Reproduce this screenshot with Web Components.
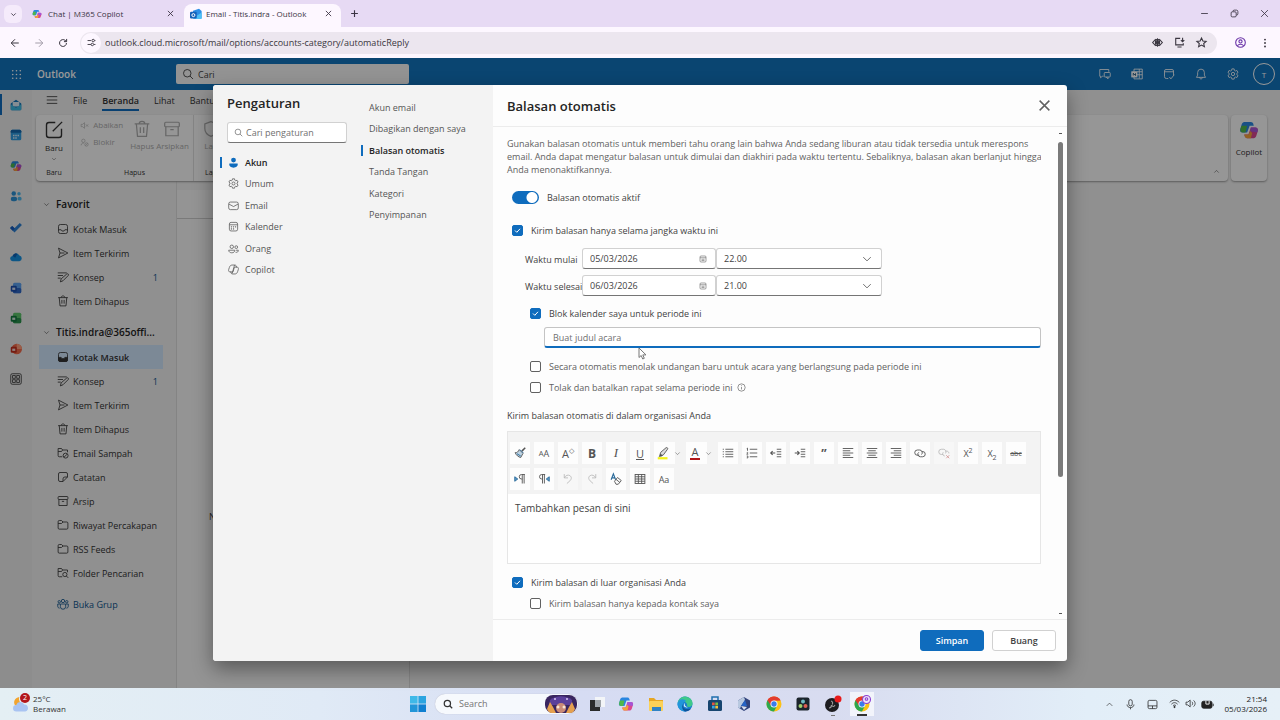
<!DOCTYPE html>
<html lang="id">
<head>
<meta charset="utf-8">
<title>Email - Titis.indra - Outlook</title>
<style>
  html, body {
    margin: 0;
    height: 100%;
  }

  body {
    --font: "Open Sans", "Noto Sans", sans-serif;
    --brand: #0f6cbd;
    font-family: var(--font);
    font-size: 9px;
    line-height: 13px;
    color: #424242;
    display: flex;
    flex-direction: column;
    overflow: hidden;
  }

  outlook-app {
    flex: 1;
    min-height: 0;
  }
</style>
</head>
<body>
  <browser-tabs></browser-tabs>
  <browser-toolbar></browser-toolbar>
  <outlook-app>
    <settings-dialog slot="dialog"></settings-dialog>
  </outlook-app>
  <task-bar></task-bar>

<script>
const copilotLogo = `
  <path d="M5 1.500h4.500c1 0 1.600.6 1.900 1.500l.4 1.500H8.500L6.500 10H3C1.200 10 .6 8.800 1 7.300l1.200-4C2.600 2 3.600 1.500 5 1.500z" fill="#2a86e0" stroke="none"/>
  <path d="M1.200 7 2 4.500h4.500L5.200 10H3C1.500 10 .8 8.700 1.200 7z" fill="#4fb84a" stroke="none"/>
  <path d="M11 14.500H6.500c-1 0-1.600-.6-1.900-1.500l-.4-1.500h3.300l2-5.500H13c1.800 0 2.400 1.200 2 2.700l-1.200 4c-.4 1.300-1.400 1.800-2.800 1.800z" fill="#d9468f" stroke="none"/>
  <path d="M4.200 11.500h3.500l1.300-3 1.500 2-1 4h-3c-1 0-1.600-.6-1.900-1.500z" fill="#f2a23a" stroke="none"/>
  <path d="M9.500 6H13c1.500 0 2.300 1.200 2 2.700L14.500 10 9 9z" fill="#a455d6" stroke="none"/>`;

const chromeLogo = `
  <g stroke="none"><circle cx="8" cy="8" r="7.500" fill="#fbc116"/>
  <path d="M8 8 1.500 4.300A7.500 7.500 0 0 1 14.500 4.300L8 4.500z" fill="#e33b2e"/>
  <path d="M1.500 4.300A7.500 7.500 0 0 0 8 15.500l3-5.700L8 8z" fill="#2da94f"/>
  <path d="M1.500 4.300 5 9.800 8 4.500h6.500A7.500 7.500 0 0 0 1.500 4.300z" fill="#e33b2e"/>
  <circle cx="8" cy="8" r="3.500" fill="#fff"/><circle cx="8" cy="8" r="2.700" fill="#3b7de9"/></g>`;

const officeLogo = (light, dark) => `
  <g stroke="none"><rect x="4" y="1" width="11" height="14" rx="2" fill="${light}"/>
  <rect x="4" y="8" width="11" height="7" rx="2" fill="${dark}" opacity=".7"/>
  <rect x="1" y="5" width="8" height="8" rx="1.500" fill="${dark}"/>
  <rect x="3" y="7.500" width="4" height="3" fill="#fff" opacity=".8"/></g>`;

// All glyphs live on a 16x16 grid
const icons = {
  chevron: '<path d="m3 5.500 5 5 5-5"/>',
  'chevron-up': '<path d="m3 10.500 5-5 5 5"/>',
  close: '<path d="m2 2 12 12M14 2 2 14"/>',
  plus: '<path d="M8 2v12M2 8h12"/>',
  minus: '<path d="M2 8h12"/>',
  restore: '<rect x="2" y="5" width="9" height="9" rx="2"/><path d="M5 4.500C5 3 6 2 7.500 2h4C13 2 14 3 14 4.500v4c0 1.500-1 2.500-2.500 2.500"/>',
  back: '<path d="M14 8H2m6-6L2 8l6 6"/>',
  forward: '<path d="M2 8h12M8 2l6 6-6 6"/>',
  reload: '<path d="M13.500 8A5.500 5.500 0 1 1 11.500 3.800L13.500 5.500M13.800 1.500v4.300H9.500"/>',
  tune: '<path d="M1 4.500h6M12.500 11.500H15M1 11.500h6"/><circle cx="11" cy="4.500" r="2.200"/><circle cx="9.500" cy="11.500" r="2.200"/><path d="M13.500 4.500H15"/>',
  eye: '<path d="M5.500 3 1 8l4.500 5M10.500 3 15 8l-4.500 5"/><ellipse cx="8" cy="8" rx="3" ry="4.500"/><circle cx="8" cy="8" r="1.800" fill="currentColor"/><path d="M8 2v12"/>',
  install: '<path d="M9 2H2.500v9.500h11V9M5 14.500h6"/><path d="M12.500 1v5.500m-2.500-2 2.500 2.500L15 4.500"/>',
  star: '<path d="m8 1.500 2 4.300 4.700.5-3.500 3.200 1 4.700L8 11.800l-4.200 2.400 1-4.700L1.300 6.300 6 5.800z"/>',
  profile: '<circle cx="8" cy="8" r="7"/><circle cx="8" cy="6.500" r="2.300"/><path d="M3.500 12.800c2-3 7-3 9 0"/>',
  more: '<g fill="currentColor" stroke="none"><circle cx="8" cy="2.500" r="1.500"/><circle cx="8" cy="8" r="1.500"/><circle cx="8" cy="13.500" r="1.500"/></g>',
  grid: '<g fill="currentColor" stroke="none"><circle cx="2.500" cy="2.500" r="1.200"/><circle cx="8" cy="2.500" r="1.200"/><circle cx="13.500" cy="2.500" r="1.200"/><circle cx="2.500" cy="8" r="1.200"/><circle cx="8" cy="8" r="1.200"/><circle cx="13.500" cy="8" r="1.200"/><circle cx="2.500" cy="13.500" r="1.200"/><circle cx="8" cy="13.500" r="1.200"/><circle cx="13.500" cy="13.500" r="1.200"/></g>',
  search: '<circle cx="7" cy="7" r="5"/><path d="m10.700 10.700 4 4"/>',
  chat: '<path d="M6 11H4.500L2 13v-2H1V2h12v3"/><rect x="7" y="6" width="8" height="6" rx="1"/><path d="M12 12v2.500L9.500 12"/>',
  news: '<path d="M4 5V1.500h11v13H4V12M8 5h7M8 9h7M11 1.500V14"/><rect x="1" y="5" width="7" height="7" fill="currentColor"/><path d="M3 10V7l3 3V7" stroke="#0b4671"/>',
  task: '<path d="M7 14H4.500A2.500 2.500 0 0 1 2 11.500V4a2 2 0 0 1 2-2h8a2 2 0 0 1 2 2v6M2 5h12"/><path d="m8.500 12 2 2.500L15 9"/>',
  bell: '<path d="M8 1.500A4.500 4.500 0 0 0 3.500 6v3.500L2 12.500h12l-1.500-3V6A4.500 4.500 0 0 0 8 1.500zM6 12.500c0 2.700 4 2.700 4 0"/>',
  gear: '<circle cx="8" cy="8" r="2.200"/><path d="m6.500 1.200-.4 2-1.300.8-2-.7-1.500 2.600L2.900 7.200v1.600l-1.600 1.300 1.500 2.600 2-.7 1.300.8.4 2h3l.4-2 1.300-.8 2 .7 1.500-2.600-1.600-1.300V7.200l1.600-1.300-1.500-2.600-2 .7-1.300-.8-.4-2z"/>',
  menu: '<path d="M1 3.500h14M1 8h14M1 12.500h14"/>',
  compose: '<path d="M9 2H4a2 2 0 0 0-2 2v8a2 2 0 0 0 2 2h8a2 2 0 0 0 2-2V7M7 9l7.500-7.500"/>',
  mute: '<path d="M2 6h2.500L8 3v10l-3.500-3H2zM10.500 6l4 4m0-4-4 4"/>',
  block: '<circle cx="6" cy="5" r="3"/><path d="M2 13c0-4 3-4 5-4"/><circle cx="11.500" cy="11.500" r="3"/><path d="m9.500 13.500 4-4"/>',
  trash: '<path d="M1.500 3.500h13M5.500 3.500c0-3 5-3 5 0M3 3.500 4 14.500h8l1-11M6.500 6.500v5M9.500 6.500v5"/>',
  archive: '<rect x="1.500" y="2" width="13" height="4" rx="1"/><path d="M2.500 6v8h11V6M6.500 8.500h3"/>',
  shield: '<path d="M8 1.500 2.500 3.500v4c0 4 3 6 5.500 7 2.500-1 5.500-3 5.500-7v-4z"/>',
  inbox: '<rect x="2" y="2" width="12" height="12" rx="2.500"/><path d="M2 9h3.500c.5 2.500 4.500 2.500 5 0H14"/>',
  'inbox-fill': '<rect x="2" y="2" width="12" height="12" rx="2.500"/><path d="M2 8.500h3.500c.5 2.500 4.500 2.500 5 0H14V12a2 2 0 0 1-2 2H4a2 2 0 0 1-2-2z" fill="currentColor"/>',
  sent: '<path d="m2 1.500 12.500 6.500L2 14.500 4 8zM4 8h6"/>',
  draft: '<path d="M1 2.500h12M1 6h7M1 9.500h4"/><path d="m4.500 14.500 1-4L13 4c1.500-1 3 .5 2 2l-7 7z"/>',
  junk: '<path d="M7 13H3a1.500 1.500 0 0 1-1.500-1.500V2H6l1.500 2H14v3M1.500 6H6l1.500-2"/><circle cx="11.500" cy="11.500" r="3.300"/><path d="m9.500 13.500 4-4"/>',
  note: '<path d="M14 8V4a2 2 0 0 0-2-2H4a2 2 0 0 0-2 2v8a2 2 0 0 0 2 2h4zM8 14v-3.500A2.500 2.500 0 0 1 10.500 8H14"/>',
  folder: '<path d="M1.500 12V3.500A1.500 1.500 0 0 1 3 2h3l2 2h5a1.500 1.500 0 0 1 1.500 1.500V12a1.500 1.500 0 0 1-1.500 1.500H3A1.500 1.500 0 0 1 1.500 12zM1.500 6H6l2-2"/>',
  'folder-search': '<path d="M7 13H3a1.500 1.500 0 0 1-1.500-1.500V2H6l1.500 2H14v3M1.500 6H6l1.500-2"/><circle cx="10.500" cy="10" r="2.800"/><path d="m12.500 12 2.500 2.500"/>',
  group: '<circle cx="8" cy="4" r="2.200"/><circle cx="3" cy="5" r="1.600"/><circle cx="13" cy="5" r="1.600"/><path d="M4.500 8h7v3.500a3.500 3.500 0 0 1-7 0zM4 8H1v3c0 1.500 1 2.500 2.500 2.500M12 8h3v3c0 1.500-1 2.500-2.500 2.500"/>',
  person: '<g fill="currentColor" stroke="none"><circle cx="8" cy="4.500" r="3.500"/><path d="M2 9.500h12c1 4-2.500 6-6 6s-7-2-6-6z"/></g>',
  mail: '<rect x="1" y="3" width="14" height="11" rx="2.500"/><path d="m1.500 6 6.500 3.500L14.500 6"/>',
  calendar: '<rect x="2" y="2" width="12" height="12.500" rx="2.500"/><path d="M2 5.500h12"/><g fill="currentColor" stroke="none"><circle cx="5" cy="8.500" r="1"/><circle cx="8" cy="8.500" r="1"/><circle cx="11" cy="8.500" r="1"/><circle cx="5" cy="11.500" r="1"/><circle cx="8" cy="11.500" r="1"/></g>',
  people: '<circle cx="5.500" cy="5.500" r="2.500"/><circle cx="12" cy="6" r="2"/><path d="M1 10.500h9c0 5-9 5-9 0zM11.500 10.500H15c0 2.500-1.500 3.500-4 3"/>',
  copilot: '<path d="M6 1.500h4c1.500 0 2 1 2.200 3H13c2 0 2.500 1.500 2 3.500l-1 3c-.5 2-1.500 3-3.500 3.500h-4c-1.500 0-2-1-2.200-3H3c-2 0-2.500-1.500-2-3.500l1-3c.5-2 2-3.500 4-3.500zM9.500 1.500 6 14M10 4.500h3M3.500 11.500H7c1 0 1.500-7 3-7"/>',
  date: '<rect x="2" y="2" width="12" height="12" rx="2"/><path d="M2 5.500h12M5 8.500h6M5 11h6"/>',
  info: '<circle cx="8" cy="8" r="6.500"/><path d="M8 7v4.500M8 4.200v1.300"/>',
  brush: '<path d="m15 1-4.500 4.500" stroke-width="2"/><path d="m7 3.500 5 5-3 5.500c-3-.5-6-3-7.500-6.500 2.500.3 4-1 5.500-4z" fill="#bcd3e4"/><path d="m4 9 5 3M8 3.500l4.500 4.500" stroke="#2a6a9a"/>',
  marker: '<path d="M1 15h13" stroke="#f3f31a" stroke-width="3"/><path d="m4 10 1-3L12 1c1.500-.8 3 .7 2 2L8.500 10.500 5 12z" fill="#ddd"/><path d="m3 12.500 2-3 2 2z" fill="currentColor"/>',
  bullets: '<path d="M4.500 3H15M4.500 6.300H15M4.500 9.700H15M4.500 13H15M1 3h1.500M1 6.300h1.500M1 9.700h1.500M1 13h1.500"/>',
  numbers: '<path d="M5 3h10M5 8h10M5 13h10M1 2l1-.5V5M1 7.500c1.500-1 2 .5 0 2h2M1 12h1.500v2.500H1"/>',
  outdent: '<path d="M9 3h6M9 6.300h6M9 9.700h6M9 13h6"/><path d="M7 8H1m2.500-2.500L1 8l2.500 2.500" stroke-width="1.500"/>',
  indent: '<path d="M9 3h6M9 6.300h6M9 9.700h6M9 13h6"/><path d="M1 8h6M4.500 5.500 7 8l-2.500 2.500" stroke-width="1.500"/>',
  left: '<path d="M1 2h14M1 5h10M1 8h14M1 11h10M1 14h14"/>',
  center: '<path d="M1 2h14M3 5h10M1 8h14M3 11h10M1 14h14"/>',
  right: '<path d="M1 2h14M5 5h10M1 8h14M5 11h10M1 14h14"/>',
  link: '<path d="M7 11H4.500a3.500 3.500 0 0 1 0-7h3a3.500 3.500 0 0 1 2.500 6"/><path d="M10 6h1.500a3.300 3.300 0 0 1 0 7h-3A3.300 3.300 0 0 1 6.500 7"/>',
  unlink: '<path d="M7 10H4.500a3 3 0 0 1 0-7h3a3.500 3.500 0 0 1 2.500 5.500M9 12a3 3 0 0 1-2-5M10 5.500h1.500c2 0 3 1.500 3 3"/><path d="m11 11 4 4m0-4-4 4" stroke="#d29a9a"/>',
  ltr: '<path d="m1 5 4 3-4 3z" fill="#5b9bc8" stroke="#2a6a9a"/><path d="M14.500 2H10a3 3 0 0 0 0 6h1M11 2v12M13.500 2v12"/>',
  rtl: '<path d="m15 5-4 3 4 3z" fill="#5b9bc8" stroke="#2a6a9a"/><path d="M9.500 2H5a3 3 0 0 0 0 6h1M6 2v12M8.500 2v12"/>',
  undo: '<path d="M3 1.500v5h5M3 6.500C5 3 8 2 10.500 3.500c3 2 2 5 0 7L6.500 14"/>',
  redo: '<path d="M13 1.500v5H8M13 6.500C11 3 8 2 5.500 3.500c-3 2-2 5 0 7l4 3.500"/>',
  clear: '<path d="M1.500 9 4.500 1l3 8M2.500 6.500h4" stroke="#2a6a9a" stroke-width="1.500"/><path d="m6 11 4-5 5 4-4 5H8zM8 8.500l5 4"/>',
  table: '<rect x="1.500" y="2" width="13" height="12"/><path d="M1.500 5h13M1.500 8h13M1.500 11h13M5.800 2v12M10.200 2v12"/>',
  windows: '<g stroke="none"><path d="M0 0h7.600v7.600H0z" fill="#3fb9e8"/><path d="M8.400 0H16v7.600H8.400z" fill="#2ba4e0"/><path d="M0 8.400h7.600V16H0z" fill="#2296d8"/><path d="M8.400 8.400H16V16H8.400z" fill="#0f7fd0"/></g>',
  taskview: '<g stroke="none"><path d="M6 1h10v10H6z" fill="#f3f5f8"/><path d="M1 4h10v11H1z" fill="#2a2a2a"/><path d="M6 4h6v7H6z" fill="#9ea3a8"/></g>',
  explorer: '<g stroke="none"><path d="M1 2h5l2 2h7v10H1z" fill="#e6a623"/><rect x="1" y="5" width="14" height="10" rx="1" fill="#fbd157"/><rect x="4" y="11" width="9" height="4" fill="#2f83c5"/></g>',
  edge: '<g stroke="none"><circle cx="8" cy="8" r="7.500" fill="#1b7fd0"/><path d="M.6 7C1.500 2.500 5.500 0 9.500.7c4 .8 6.500 4 6 7.300-.4 2.500-3 3.500-5.500 2.500 1-3-1.500-5-4-5S2 6 .6 7z" fill="#3fc98a"/><path d="M.6 7C2 2.500 7 2 9.500 5.500 8 5 6.500 6 6 8c-.8 3 .5 6 3 7.400C4 15.800 0 12 .6 7z" fill="#2196da"/><path d="M6 8c-1 4 2.500 6 8 4.500-1.500 2.200-3.500 3-6 3C5 14 4.500 10 6 8z" fill="#0f549c"/><path d="M8 7c-1 2 .5 4 3 4-1 .6-3 .5-3.800-.4C6.500 9.500 7 7.500 8 7z" fill="#e8f4fb"/></g>',
  store: '<g stroke="none"><path d="M5 4V1h6v3" stroke="#1f6fae" fill="none" stroke-width="1.500"/><rect x="1" y="4" width="14" height="11" rx="1.500" fill="#17456f"/><path d="M5 6.500h2.700v2.700H5z" fill="#e65540"/><path d="M8.300 6.500H11v2.700H8.300z" fill="#7cbc44"/><path d="M5 9.800h2.700v2.700H5z" fill="#35a7e4"/><path d="M8.300 9.800H11v2.700H8.300z" fill="#f4c13a"/></g>',
  hex: '<g stroke="none"><path d="m8 1 6 3.500v7L8 15l-6-3.500v-7z" fill="#31437c"/><path d="m8 1 1 3-4 6-1 2.700-2-1.200v-7z" fill="#b9c9e0"/><path d="m9 4 2 6H5z" fill="#2663c4"/><path d="m5 10 6 1-3 3z" fill="#d7deee"/></g>',
  resolve: '<g stroke="none"><rect x="1.500" y="1.500" width="13" height="13" rx="2" fill="#1c252c"/><circle cx="8" cy="5.500" r="2" fill="#6fbac2"/><circle cx="5.500" cy="10" r="2" fill="#9fcf6c"/><circle cx="10.500" cy="10" r="2" fill="#dd5f52"/></g>',
  obs: '<g stroke="none"><circle cx="7" cy="9" r="7" fill="#1d1d20"/><path d="M6 5c2 .5 2 2.500 1 3.500M10 9c-1 2-2 2-3 .5M4 12c1.500 0 2.500-1.500 2.500-3" stroke="#9a9a9a" fill="none"/><circle cx="13" cy="3" r="3.500" fill="#e81a1a"/></g>',
  chromelogo: chromeLogo,
  'chromelogo-user': `${chromeLogo}<circle cx="12.500" cy="3.500" r="4" fill="#efe2fb" stroke="#8a3fd1"/><circle cx="12.500" cy="3" r="1.300" stroke="#8a3fd1"/>`,
  m365: copilotLogo,
  outlook: '<g stroke="none"><path d="M4 3.500 12 1l3.500 3v9.500H4z" fill="#2b8fe6"/><path d="M4 13.500 15.500 6v8.500H5z" fill="#4ec0f5"/><rect x="0" y="5" width="9" height="9" rx="1.500" fill="#1461b8"/><circle cx="4.500" cy="9.500" r="2" stroke="#fff" stroke-width="1.300" fill="none"/></g>',
  'app-mail': '<g stroke="none"><path d="M1 6 8 1l7 5v7.500A1.500 1.500 0 0 1 13.500 15h-11A1.500 1.500 0 0 1 1 13.500z" fill="#1273b8"/><path d="M3.500 4h9v6h-9z" fill="#dcecf5"/><path d="m1 7 7 4.500L15 7v6.500A1.500 1.500 0 0 1 13.500 15h-11A1.500 1.500 0 0 1 1 13.500z" fill="#3fb7e0"/></g>',
  'app-calendar': '<g stroke="none"><rect x="1" y="1" width="14" height="14" rx="2" fill="#2f9be0"/><path d="M1 5V3a2 2 0 0 1 2-2h10a2 2 0 0 1 2 2v2z" fill="#1568ad"/><path d="M4 7.500h2v2H4zM7 7.500h2v2H7zM10 7.500h2v2h-2zM4 11h2v2H4zM7 11h2v2H7z" fill="#d5edfb"/></g>',
  'app-people': '<g stroke="none" fill="#2c8fd3"><circle cx="5" cy="4.500" r="3"/><circle cx="12" cy="5" r="2.300" fill="#4db6ea"/><rect x="1" y="9" width="8.500" height="6" rx="3"/><rect x="10" y="9" width="5.500" height="5" rx="2.500" fill="#4db6ea"/></g>',
  'app-todo': '<path d="m1.500 8 4.500 4.500L14.500 4" stroke="#2d7fd0" stroke-width="4"/><path d="m1.500 8 3.500 3.500" stroke="#185abd" stroke-width="4"/>',
  'app-onedrive': '<g stroke="none"><path d="M4 13.500a3.500 3.500 0 0 1-.5-7A5 5 0 0 1 12.500 6a3.800 3.800 0 0 1 0 7.500z" fill="#1490df"/><path d="M3.500 6.500A5 5 0 0 1 10 3.500L7 9z" fill="#0f5fb5"/></g>',
  'app-word': officeLogo('#5ca0ee', '#1d4fb0'),
  'app-excel': officeLogo('#5cc46a', '#137a3f'),
  'app-powerpoint': '<g stroke="none"><circle cx="9" cy="8" r="7" fill="#f0694a"/><path d="M9 1a7 7 0 0 1 7 7H9z" fill="#ff9d7a"/><rect x="1" y="5" width="8" height="8" rx="1.500" fill="#c22f1e"/><rect x="3" y="7.500" width="4" height="3" fill="#fff" opacity=".8"/></g>',
  'app-more': '<rect x="1" y="1" width="14" height="14" rx="2"/><rect x="3.500" y="3.500" width="3.500" height="3.500"/><rect x="9" y="3.500" width="3.500" height="3.500"/><rect x="3.500" y="9" width="3.500" height="3.500"/><rect x="9" y="9" width="3.500" height="3.500"/>',
  weather: '<g stroke="none"><path d="M7 1C2 2 1 6 3 9l6-2C7 6 6 3 7 1z" fill="#f3a52f"/><path d="M4 14.500a3 3 0 0 1 0-6 4 4 0 0 1 7.500-.5 3.300 3.300 0 0 1 1 6.500z" fill="#a9c4f2"/></g>',
  mic: '<rect x="5.500" y="1" width="5" height="9" rx="2.500"/><path d="M3 8c0 6 10 6 10 0M8 12.500V15"/>',
  touchpad: '<rect x="1.500" y="2" width="13" height="12" rx="2"/><path d="M1.500 10h13M8 10v4"/>',
  wifi: '<path d="M1 6.500c4-4.500 10-4.500 14 0M3.500 9c3-3 6-3 9 0M5.800 11.300c1.500-1.500 3-1.500 4.400 0"/><circle cx="8" cy="13" r="1" fill="currentColor"/>',
  sound: '<path d="M1.500 6H4l3.500-3v10L4 10H1.500zM10 5.500c1.500 1.500 1.500 3.500 0 5M12.500 3.500c3 3 3 6 0 9"/>',
  battery: '<rect x="1" y="4" width="12.500" height="8.500" rx="2" fill="currentColor"/><path d="M15 7v3"/><path d="M6 3.500v4h4v-4" stroke="#fff"/>',
};

// Base class: every element renders its own template into an open shadow root
class BaseElement extends HTMLElement {
  constructor() {
    super();

    const template = document.createElement('template');
    template.innerHTML = this.template();

    this.attachShadow({ mode: 'open' });
    this.shadowRoot.appendChild(template.content.cloneNode(true));
  }
}

class UiIcon extends HTMLElement {
  static get observedAttributes() {
    return ['name', 'size'];
  }

  constructor() {
    super();
    this.attachShadow({ mode: 'open' });
  }

  connectedCallback() {
    this.render();
  }

  attributeChangedCallback() {
    this.render();
  }

  render() {
    const size = this.getAttribute('size') || 12;

    this.shadowRoot.innerHTML = `
      <style>
        :host { display: inline-flex; flex: none; }
        svg { fill: none; stroke: currentColor; stroke-width: var(--stroke, 1.1); overflow: visible; }
      </style>
      <svg width="${size}" height="${size}" viewBox="0 0 16 16" aria-hidden="true">${icons[this.getAttribute('name')] || ''}</svg>
    `;
  }
}

window.customElements.define('ui-icon', UiIcon);

const resetButton = `
  button {
    font: inherit;
    color: inherit;
    background: none;
    border: 0;
    padding: 0;
    margin: 0;
    display: inline-flex;
    align-items: center;
    justify-content: center;
  }
`;

class BrowserTabs extends BaseElement {
  template() {
    return `
      <style>
        :host { display: flex; height: 27px; background: #e7daf4; color: #3b3443; align-items: stretch; font-size: 8px; --stroke: 2; }
        ${resetButton}
        .list { width: 18px; height: 18px; margin: 5px 4px; border-radius: 6px; background: #f5ebfb; }
        .tab { display: flex; align-items: center; gap: 6px; width: 142px; padding: 0 7px 0 6px; }
        .tab.active { gap: 4px; background: #fdf7ff; border-radius: 8px 8px 0 0; margin: 4px 0 0 3px; padding: 0 9px 4px 6px; }
        .name { flex: 1; white-space: nowrap; }
        .new { padding: 0 9px; }
        .window { margin-left: auto; display: flex; gap: 21px; padding-right: 11px; --stroke: 1.5; }
      </style>
      <button class="list" aria-label="Cari tab"><ui-icon name="chevron" size="7"></ui-icon></button>
      <div class="tab">
        <ui-icon name="m365" size="10"></ui-icon>
        <span class="name">Chat | M365 Copilot</span>
        <button aria-label="Tutup"><ui-icon name="close" size="7"></ui-icon></button>
      </div>
      <div class="tab active">
        <ui-icon name="outlook" size="12"></ui-icon>
        <span class="name">Email - Titis.indra - Outlook</span>
        <button aria-label="Tutup"><ui-icon name="close" size="7"></ui-icon></button>
      </div>
      <button class="new" aria-label="Tab baru"><ui-icon name="plus" size="9"></ui-icon></button>
      <div class="window">
        <button aria-label="Kecilkan"><ui-icon name="minus" size="9"></ui-icon></button>
        <button aria-label="Pulihkan"><ui-icon name="restore" size="9"></ui-icon></button>
        <button aria-label="Tutup"><ui-icon name="close" size="9"></ui-icon></button>
      </div>
    `;
  }
}

class BrowserToolbar extends BaseElement {
  template() {
    return `
      <style>
        :host { display: flex; align-items: center; height: 31px; padding: 0 10px; gap: 14px; background: #fdf7ff; color: #3a3640; --stroke: 1.6; box-sizing: border-box; }
        ${resetButton}
        .off { color: #a39da9; }
        .address { flex: 1; display: flex; align-items: center; gap: 11px; height: 22px; margin: 0 -2px 0 -2px; padding-right: 10px; border-radius: 11px; background: #ece6ef; }
        .site { width: 20px; height: 20px; margin-left: 1px; border-radius: 50%; background: #fdf7ff; }
        input { flex: 1; min-width: 0; border: 0; padding: 0; margin-left: -7px; background: none; font: inherit; color: inherit; outline: 0; }
        .profile { margin-left: 6px; color: #6a34a8; }
      </style>
      <button aria-label="Kembali"><ui-icon name="back" size="10"></ui-icon></button>
      <button class="off" aria-label="Maju"><ui-icon name="forward" size="10"></ui-icon></button>
      <button aria-label="Muat ulang"><ui-icon name="reload" size="10"></ui-icon></button>
      <div class="address">
        <button class="site" aria-label="Informasi situs"><ui-icon name="tune" size="9"></ui-icon></button>
        <input aria-label="Alamat" value="outlook.cloud.microsoft/mail/options/accounts-category/automaticReply">
        <ui-icon name="eye" size="11"></ui-icon>
        <ui-icon name="install" size="11"></ui-icon>
        <ui-icon name="star" size="11"></ui-icon>
      </div>
      <button class="profile" aria-label="Profil"><ui-icon name="profile" size="11"></ui-icon></button>
      <button aria-label="Menu"><ui-icon name="more" size="10"></ui-icon></button>
    `;
  }
}

class OutlookHeader extends BaseElement {
  template() {
    return `
      <style>
        :host { display: flex; align-items: center; height: 32px; background: #1274bd; color: #fff; padding-right: 5px; }
        ${resetButton}
        .waffle { width: 32px; }
        h1 { margin: 0; padding-left: 5px; width: 144px; box-sizing: border-box; font-size: 10px; font-weight: 600; }
        .search { display: flex; align-items: center; gap: 4px; width: 233px; height: 20px; box-sizing: border-box; padding-left: 6px; border-radius: 2px; background: #f5f5f5; color: #333; }
        input { flex: 1; min-width: 0; border: 0; padding: 0; background: none; font: inherit; color: inherit; }
        input::placeholder { color: #444; }
        .actions { margin-left: auto; display: flex; align-items: center; gap: 20px; }
        .avatar { width: 20px; height: 20px; margin-left: -6px; border: 1px solid #fff; border-radius: 50%; box-sizing: content-box; font-size: 8px; }
      </style>
      <button class="waffle" aria-label="Peluncur aplikasi"><ui-icon name="grid" size="11"></ui-icon></button>
      <h1>Outlook</h1>
      <label class="search">
        <ui-icon name="search" size="12"></ui-icon>
        <input type="search" aria-label="Cari" placeholder="Cari">
      </label>
      <div class="actions">
        <button aria-label="Chat"><ui-icon name="chat" size="12"></ui-icon></button>
        <button aria-label="Umpan"><ui-icon name="news" size="12"></ui-icon></button>
        <button aria-label="Hari Saya"><ui-icon name="task" size="12"></ui-icon></button>
        <button aria-label="Pemberitahuan"><ui-icon name="bell" size="12"></ui-icon></button>
        <button aria-label="Pengaturan"><ui-icon name="gear" size="12"></ui-icon></button>
        <button class="avatar" aria-label="Akun">T</button>
      </div>
    `;
  }
}

class AppRail extends BaseElement {
  template() {
    const apps = ['mail', 'calendar', 'copilot', 'people', 'todo', 'onedrive', 'word', 'excel', 'powerpoint', 'more'];

    return `
      <style>
        :host { display: flex; flex-direction: column; width: 32px; background: #ebebeb; }
        ${resetButton}
        nav { display: flex; flex-direction: column; justify-content: space-between; height: 296px; padding-top: 4px; }
        button { height: 21px; border-left: 2px solid transparent; padding-right: 2px; color: #333; }
        button.active { border-color: var(--brand); }
      </style>
      <nav>
        ${apps.map((app, i) => `<button class="${i ? '' : 'active'}" aria-label="${app}"><ui-icon name="${app === 'copilot' ? 'm365' : `app-${app}`}" size="12"></ui-icon></button>`).join('')}
      </nav>
    `;
  }
}

class RibbonBar extends BaseElement {
  template() {
    return `
      <style>
        :host { display: block; color: #333; padding: 0 13px 0 4px; }
        ${resetButton}
        .tabs { display: flex; align-items: center; gap: 15px; height: 22px; margin-top: 1px; padding: 0 0 2px 10px; box-sizing: border-box; }
        .tabs button { height: 19px; border-bottom: 2px solid transparent; }
        .tabs button.active { font-weight: 600; border-color: var(--brand); }
        .cards { display: flex; gap: 3px; }
        .card { display: flex; height: 66px; margin-top: 2px; background: #fafafa; border-radius: 4px; box-shadow: 0 1px 2px #999; }
        .main { flex: 1; position: relative; }
        .group { display: flex; flex-direction: column; justify-content: space-between; align-items: center; padding: 5px 0 3px; border-right: 1px solid #ddd; font-size: 8px; line-height: 10px; box-sizing: border-box; }
        .group > span { font-size: 7px; }
        .group:last-of-type { border: 0; }
        .row { display: flex; gap: 2px; color: #aaa; }
        .stack { display: flex; flex-direction: column; gap: 7px; width: 48px; align-items: flex-start; }
        .stack button { gap: 4px; }
        .tall { flex-direction: column; gap: 3px; }
        .new { width: 37px; }
        .delete { width: 121px; padding-left: 3px; }
        .report { width: 34px; }
        .toggle { position: absolute; right: 8px; bottom: 6px; }
        .copilot { width: 36px; flex-direction: column; align-items: center; justify-content: flex-start; gap: 5px; padding-top: 5px; box-sizing: border-box; font-size: 8px; }
      </style>
      <div class="tabs">
        <button aria-label="Menu"><ui-icon name="menu" size="12"></ui-icon></button>
        <button>File</button>
        <button class="active">Beranda</button>
        <button>Lihat</button>
        <button>Bantu</button>
      </div>
      <div class="cards">
        <div class="card main">
          <div class="group new">
            <button class="tall"><ui-icon name="compose" size="20"></ui-icon><b style="font-weight: 400">Baru</b><ui-icon name="chevron" size="6"></ui-icon></button>
            <span>Baru</span>
          </div>
          <div class="group delete">
            <div class="row">
              <div class="stack">
                <button><ui-icon name="mute" size="9"></ui-icon>Abaikan</button>
                <button><ui-icon name="block" size="9"></ui-icon>Blokir</button>
              </div>
              <button class="tall"><ui-icon name="trash" size="18"></ui-icon>Hapus</button>
              <button class="tall"><ui-icon name="archive" size="18"></ui-icon>Arsipkan</button>
            </div>
            <span>Hapus</span>
          </div>
          <div class="group report">
            <div class="row"><button class="tall"><ui-icon name="shield" size="18"></ui-icon>Lap</button></div>
            <span>Lap</span>
          </div>
          <button class="toggle" aria-label="Ciutkan pita"><ui-icon name="chevron-up" size="7"></ui-icon></button>
        </div>
        <button class="card copilot"><ui-icon name="m365" size="20"></ui-icon>Copilot</button>
      </div>
    `;
  }
}

class FolderItem extends BaseElement {
  static get observedAttributes() {
    return ['icon', 'count'];
  }

  attributeChangedCallback(name, oldValue, value) {
    if (name === 'icon') {
      this.shadowRoot.querySelector('ui-icon').setAttribute('name', value);
    } else {
      this.shadowRoot.querySelector('.count').textContent = value;
    }
  }

  template() {
    return `
      <style>
        :host { display: block; margin: 0 13px 0 7px; color: #333; }
        :host([active]) { background: #cfe4fa; font-weight: 600; }
        :host([link]) { color: #0f548c; }
        a { display: flex; align-items: center; gap: 4px; height: 24px; padding: 0 5px 0 18px; color: inherit; text-decoration: none; white-space: nowrap; }
        .count { margin-left: auto; color: #0f548c; }
      </style>
      <a href="#folder"><ui-icon size="12"></ui-icon><slot></slot><span class="count"></span></a>
    `;
  }
}

class FolderTree extends BaseElement {
  template() {
    return `
      <style>
        :host { display: block; width: 145px; padding-top: 11px; box-sizing: border-box; border-right: 1px solid #ddd; color: #222; }
        h2 { display: flex; align-items: center; gap: 6px; height: 25px; margin: 0; padding-left: 11px; font-size: 10px; font-weight: 600; white-space: nowrap; }
        section { margin-bottom: 7px; }
      </style>
      <section>
        <h2><ui-icon name="chevron" size="7"></ui-icon>Favorit</h2>
        <folder-item icon="inbox">Kotak Masuk</folder-item>
        <folder-item icon="sent">Item Terkirim</folder-item>
        <folder-item icon="draft" count="1">Konsep</folder-item>
        <folder-item icon="trash">Item Dihapus</folder-item>
      </section>
      <section>
        <h2><ui-icon name="chevron" size="7"></ui-icon>Titis.indra@365offi...</h2>
        <folder-item icon="inbox-fill" active>Kotak Masuk</folder-item>
        <folder-item icon="draft" count="1">Konsep</folder-item>
        <folder-item icon="sent">Item Terkirim</folder-item>
        <folder-item icon="trash">Item Dihapus</folder-item>
        <folder-item icon="junk">Email Sampah</folder-item>
        <folder-item icon="note">Catatan</folder-item>
        <folder-item icon="archive">Arsip</folder-item>
        <folder-item icon="folder">Riwayat Percakapan</folder-item>
        <folder-item icon="folder">RSS Feeds</folder-item>
        <folder-item icon="folder-search">Folder Pencarian</folder-item>
      </section>
      <folder-item icon="group" link>Buka Grup</folder-item>
    `;
  }
}

class OutlookApp extends BaseElement {
  template() {
    return `
      <style>
        :host { display: flex; flex-direction: column; position: relative; background: #f0f0f0; }
        .body { flex: 1; display: flex; min-height: 0; }
        main { flex: 1; display: flex; flex-direction: column; min-width: 0; min-height: 0; }
        .panes { flex: 1; display: flex; min-height: 0; }
        .list { width: 233px; margin-top: 9px; box-sizing: border-box; border-right: 1px solid #ddd; background: #f7f7f7; }
        .bar { height: 28px; border-bottom: 1px solid #ccc; }
        .empty { margin: 291px 0 0 32px; }
        .overlay { position: absolute; inset: 0; display: flex; justify-content: center; padding: 27px 16px; background: rgba(0, 0, 0, .4); }
      </style>
      <outlook-header></outlook-header>
      <div class="body">
        <app-rail></app-rail>
        <main>
          <ribbon-bar></ribbon-bar>
          <div class="panes">
            <folder-tree></folder-tree>
            <div class="list"><div class="bar"></div><div class="empty">N</div></div>
          </div>
        </main>
      </div>
      <div class="overlay"><slot name="dialog"></slot></div>
    `;
  }
}

class CheckField extends BaseElement {
  static get observedAttributes() {
    return ['checked'];
  }

  attributeChangedCallback() {
    this.shadowRoot.querySelector('input').checked = this.hasAttribute('checked');
  }

  template() {
    return `
      <style>
        :host { display: block; }
        label { display: flex; align-items: center; gap: 8px; height: 20px; white-space: nowrap; }
        input { appearance: none; flex: none; width: 11px; height: 11px; margin: 0; border: 1px solid #616161; border-radius: 2px; background: #fff; }
        input:checked { border-color: var(--brand); background: var(--brand); }
        .box { position: relative; display: flex; }
        svg { position: absolute; left: 2px; top: 2px; display: none; }
        input:checked + svg { display: block; }
      </style>
      <label>
        <span class="box">
          <input type="checkbox">
          <svg width="7" height="7" viewBox="0 0 7 7" fill="none" stroke="#fff"><path d="m1 3.500 1.800 1.800L6 1.800"/></svg>
        </span>
        <slot></slot>
      </label>
    `;
  }
}

class TimeRow extends BaseElement {
  static get observedAttributes() {
    return ['label', 'date', 'time'];
  }

  attributeChangedCallback(name, oldValue, value) {
    if (name === 'label') {
      this.shadowRoot.querySelector('label').textContent = value;
    } else if (name === 'date') {
      this.shadowRoot.querySelector('input').setAttribute('value', value);
    } else {
      this.shadowRoot.querySelector('option').textContent = value;
    }
  }

  template() {
    return `
      <style>
        :host { display: flex; align-items: center; height: 21px; }
        label { width: 57px; padding-top: 2px; white-space: nowrap; }
        .box { display: flex; align-items: center; height: 21px; padding: 0 8px 0 7px; box-sizing: border-box; border: 1px solid #d1d1d1; border-bottom-color: #757575; border-radius: 3px; color: #616161; background: #fff; }
        .date { width: 134px; }
        .time { width: 166px; }
        input, select { appearance: none; flex: 1; min-width: 0; border: 0; padding: 0; background: none; font: inherit; color: #424242; outline: 0; }
      </style>
      <label for="date"></label>
      <div class="box date"><input id="date"><ui-icon name="date" size="8"></ui-icon></div>
      <div class="box time"><select aria-label="Jam"><option></option></select><ui-icon name="chevron" size="12"></ui-icon></div>
    `;
  }
}

class RichEditor extends BaseElement {
  template() {
    const tool = (icon, label, cls = '') => `<button class="${cls}" aria-label="${label}"><ui-icon name="${icon}" size="12"></ui-icon></button>`;

    return `
      <style>
        :host { display: block; border: 1px solid #e6e6e6; box-sizing: border-box; }
        ${resetButton}
        .toolbar { display: flex; flex-wrap: wrap; align-content: flex-start; gap: 4px; height: 62px; padding: 10px 2px 0; box-sizing: border-box; background: #f3f3f3; }
        button { width: 20px; height: 22px; background: #fdfdfd; font-size: 9px; color: #555; }
        button.wide { width: 28px; gap: 5px; padding-left: 2px; background: linear-gradient(90deg, #fdfdfd 21px, #f3f3f3 21px); }
        button.off { color: #bbb; background: #f7f7f7; }
        .b { font-size: 12px; font-weight: 700; }
        .i { font: italic 13px "Liberation Serif", serif; }
        .u { font-size: 11px; text-decoration: underline; }
        .color { font-size: 11px; line-height: 12px; border-bottom: 2px solid #b01818; padding: 0 2px; }
        .big { font-size: 11px; }
        .strike { font-size: 7px; text-decoration: line-through; }
        .quote { font-size: 12px; font-weight: 700; }
        sup, sub { font-size: 7px; line-height: 0; }
        textarea { display: block; width: 100%; height: 69px; box-sizing: border-box; padding: 7px; border: 0; resize: none; background: #fff; font: inherit; font-size: 10px; line-height: 14px; color: #424242; outline: 0; }
      </style>
      <div class="toolbar">
        ${tool('brush', 'Pewarna format')}
        <button aria-label="Font"><small>A</small>A</button>
        <button aria-label="Ukuran font"><span class="big">A<sup>◇</sup></span></button>
        <button aria-label="Tebal"><span class="b">B</span></button>
        <button aria-label="Miring"><span class="i">I</span></button>
        <button aria-label="Garis bawah"><span class="u">U</span></button>
        <button class="wide" aria-label="Sorotan"><ui-icon name="marker" size="12"></ui-icon><ui-icon name="chevron" size="7"></ui-icon></button>
        <button class="wide" aria-label="Warna font"><span class="color">A</span><ui-icon name="chevron" size="7"></ui-icon></button>
        ${tool('bullets', 'Poin')}
        ${tool('numbers', 'Penomoran')}
        ${tool('outdent', 'Kurangi inden')}
        ${tool('indent', 'Tambah inden')}
        <button aria-label="Kutipan"><span class="quote">”</span></button>
        ${tool('left', 'Rata kiri')}
        ${tool('center', 'Rata tengah')}
        ${tool('right', 'Rata kanan')}
        ${tool('link', 'Sisipkan tautan')}
        ${tool('unlink', 'Hapus tautan', 'off')}
        <button aria-label="Superskrip"><span>X<sup>2</sup></span></button>
        <button aria-label="Subskrip"><span>X<sub>2</sub></span></button>
        <button aria-label="Coret"><span class="strike">abc</span></button>
        ${tool('ltr', 'Kiri ke kanan')}
        ${tool('rtl', 'Kanan ke kiri')}
        ${tool('undo', 'Urungkan', 'off')}
        ${tool('redo', 'Ulangi', 'off')}
        ${tool('clear', 'Hapus format')}
        ${tool('table', 'Tabel')}
        <button aria-label="Opsi font">Aa</button>
      </div>
      <textarea aria-label="Pesan">Tambahkan pesan di sini</textarea>
    `;
  }
}

class SettingsNav extends BaseElement {
  template() {
    return `
      <style>
        :host { display: flex; width: 280px; flex: none; background: #f3f3f3; color: #555; border-radius: 3px 0 0 3px; }
        .primary { width: 148px; padding: 10px 0 0 7px; box-sizing: border-box; }
        h2 { margin: 0 0 10px 7px; font-size: 13px; line-height: 17px; font-weight: 600; color: #242424; }
        label { display: flex; align-items: center; gap: 3px; height: 21px; width: 120px; margin: 0 0 9px 7px; padding-left: 6px; box-sizing: border-box; border: 1px solid #d1d1d1; border-bottom-color: #757575; border-radius: 3px; background: #fff; }
        input { flex: 1; min-width: 0; border: 0; padding: 0; background: none; font: inherit; outline: 0; }
        input::placeholder { color: #707070; }
        .items { display: flex; flex-direction: column; justify-content: space-between; height: 128px; }
        a { position: relative; display: flex; align-items: center; gap: 6px; height: 21px; padding-left: 8px; color: inherit; text-decoration: none; white-space: nowrap; }
        .secondary { flex: 1; padding-top: 12px; }
        a.active { font-weight: 600; color: #242424; }
        a.active ui-icon { color: var(--brand); }
        a.active::before { content: ""; position: absolute; left: 0; width: 2px; height: 11px; background: var(--brand); }
      </style>
      <nav class="primary">
        <h2>Pengaturan</h2>
        <label><ui-icon name="search" size="9"></ui-icon><input aria-label="Cari pengaturan" placeholder="Cari pengaturan"></label>
        <div class="items">
          <a class="active" href="#akun"><ui-icon name="person" size="11"></ui-icon>Akun</a>
          <a href="#umum"><ui-icon name="gear" size="11"></ui-icon>Umum</a>
          <a href="#email"><ui-icon name="mail" size="11"></ui-icon>Email</a>
          <a href="#kalender"><ui-icon name="calendar" size="11"></ui-icon>Kalender</a>
          <a href="#orang"><ui-icon name="people" size="11"></ui-icon>Orang</a>
          <a href="#copilot"><ui-icon name="copilot" size="11"></ui-icon>Copilot</a>
        </div>
      </nav>
      <nav class="secondary">
        <div class="items">
          <a href="#akun-email">Akun email</a>
          <a href="#dibagikan">Dibagikan dengan saya</a>
          <a class="active" href="#balasan">Balasan otomatis</a>
          <a href="#tanda-tangan">Tanda Tangan</a>
          <a href="#kategori">Kategori</a>
          <a href="#penyimpanan">Penyimpanan</a>
        </div>
      </nav>
    `;
  }
}

class SettingsDialog extends BaseElement {
  template() {
    return `
      <style>
        :host { display: flex; width: 100%; max-width: 854px; background: #fdfdfd; border-radius: 3px; box-shadow: 0 8px 20px rgba(0, 0, 0, .4); overflow: hidden; }
        ${resetButton}
        .panel { flex: 1; min-width: 0; display: flex; flex-direction: column; }
        header { display: flex; align-items: center; justify-content: space-between; height: 42px; box-sizing: border-box; padding: 0 16px 0 14px; border-bottom: 1px solid #ececec; color: #616161; --stroke: 1.8; }
        h3 { margin: 0; font-size: 13px; line-height: 18px; font-weight: 600; color: #242424; }
        .scroll { flex: 1; display: flex; min-height: 0; --stroke: 1.2; }
        .content { flex: 1; min-width: 0; padding: 10px 0 0 14px; overflow: hidden; }
        p { margin: 0 0 11px; color: #616161; white-space: nowrap; }
        .toggle { display: flex; align-items: center; gap: 8px; height: 20px; margin: 0 0 13px 5px; }
        .toggle input { appearance: none; width: 27px; height: 13px; margin: 0; border-radius: 7px; background: radial-gradient(circle at 20px 50%, #fff 5px, transparent 6px) var(--brand); }
        .indent { margin-left: 5px; }
        .inner { margin-left: 23px; }
        .muted { color: #616161; }
        .times { display: flex; flex-direction: column; gap: 6px; margin: 8px 0 7px 18px; }
        .title { display: block; width: calc(100% - 37px); height: 21px; box-sizing: border-box; margin: 4px 0 8px 37px; padding: 0 8px; border: 1px solid #c4c4c4; border-bottom: 2px solid var(--brand); border-radius: 3px; background: #fff; font: inherit; outline: 0; }
        .title::placeholder { color: #707070; }
        .meeting { display: flex; gap: 4px; align-items: center; margin-top: 1px; }
        h4 { margin: 9px 0 5px; font-size: 9px; line-height: 20px; font-weight: 400; }
        rich-editor { margin-bottom: 8px; }
        .sub { margin-top: 1px; }
        .bar { width: 26px; flex: none; display: flex; flex-direction: column; align-items: flex-end; padding: 6px 4px 5px 0; box-sizing: border-box; }
        .track { flex: 1; width: 5px; margin: 8px 0 6px; }
        .thumb { height: 72%; border-radius: 3px; background: #7a7a7a; }
        .arrow { width: 3px; height: 1px; margin-right: 1px; background: #555; }
        footer { display: flex; justify-content: flex-end; gap: 8px; padding: 10px 11px; border-top: 1px solid #ececec; }
        footer button { width: 64px; height: 21px; box-sizing: border-box; border: 1px solid #d1d1d1; border-radius: 3px; font-weight: 600; background: #fff; }
        footer button.primary { background: var(--brand); border-color: var(--brand); color: #fff; }
        .pointer { position: absolute; left: 638px; top: 289px; }
      </style>
      <settings-nav></settings-nav>
      <div class="panel">
        <header>
          <h3>Balasan otomatis</h3>
          <button aria-label="Tutup"><ui-icon name="close" size="13"></ui-icon></button>
        </header>
        <div class="scroll">
          <div class="content">
            <p>Gunakan balasan otomatis untuk memberi tahu orang lain bahwa Anda sedang liburan atau tidak tersedia untuk merespons<br>email. Anda dapat mengatur balasan untuk dimulai dan diakhiri pada waktu tertentu. Sebaliknya, balasan akan berlanjut hingga<br>Anda menonaktifkannya.</p>
            <label class="toggle"><input type="checkbox" role="switch" checked>Balasan otomatis aktif</label>
            <check-field class="indent" checked>Kirim balasan hanya selama jangka waktu ini</check-field>
            <div class="times">
              <time-row label="Waktu mulai" date="05/03/2026" time="22.00"></time-row>
              <time-row label="Waktu selesai" date="06/03/2026" time="21.00"></time-row>
            </div>
            <check-field class="inner" checked>Blok kalender saya untuk periode ini</check-field>
            <input class="title" aria-label="Judul acara" placeholder="Buat judul acara">
            <check-field class="inner muted">Secara otomatis menolak undangan baru untuk acara yang berlangsung pada periode ini</check-field>
            <div class="meeting inner muted">
              <check-field>Tolak dan batalkan rapat selama periode ini</check-field>
              <ui-icon name="info" size="9"></ui-icon>
            </div>
            <h4>Kirim balasan otomatis di dalam organisasi Anda</h4>
            <rich-editor></rich-editor>
            <check-field class="indent" checked>Kirim balasan di luar organisasi Anda</check-field>
            <check-field class="inner sub muted">Kirim balasan hanya kepada kontak saya</check-field>
          </div>
          <div class="bar">
            <div class="arrow"></div>
            <div class="track"><div class="thumb"></div></div>
            <div class="arrow"></div>
          </div>
        </div>
        <footer>
          <button class="primary">Simpan</button>
          <button>Buang</button>
        </footer>
      </div>
      <svg class="pointer" width="9" height="13" viewBox="0 0 9 13"><path d="M1 1v9.500l2.200-2 1.500 3.500 1.600-.7-1.500-3.400H8z" fill="#fff" stroke="#777"/></svg>
    `;
  }
}

class TaskBar extends BaseElement {
  template() {
    const apps = ['taskview', 'm365', 'explorer', 'edge', 'store', 'hex', 'chromelogo', 'resolve', 'obs', 'chromelogo-user'];

    return `
      <style>
        :host { display: grid; grid-template-columns: 1fr auto 1fr; align-items: center; height: 32px; box-sizing: border-box; background: linear-gradient(90deg, #e4eff4, #e0eaf6 25%, #d6dcf3 45%, #d8dcf0 65%, #e2eef8 85%, #e6f0f7); color: #333; font-size: 8px; line-height: 10px; }
        ${resetButton}
        .weather { display: flex; align-items: center; gap: 4px; padding-left: 12px; }
        .sky { position: relative; display: flex; }
        .badge { position: absolute; left: 8px; top: -3px; width: 10px; height: 10px; border-radius: 50%; background: #b3161b; color: #fff; text-align: center; font-size: 7px; }
        .middle { display: flex; align-items: center; }
        .search { display: flex; align-items: center; gap: 6px; width: 143px; height: 20px; margin: 0 11px 0 9px; padding: 0 1px 0 8px; box-sizing: border-box; border-radius: 10px; background: #f6f9fd; box-shadow: 0 0 1px #aab; --stroke: 2; }
        .search input { flex: 1; min-width: 0; border: 0; padding: 0; background: none; font: inherit; font-size: 9px; outline: 0; }
        .apps { display: flex; justify-content: space-between; width: 281px; }
        .apps button { position: relative; }
        .apps button:last-child { box-shadow: 0 0 0 4px #f2f4fb; background: #f2f4fb; }
        .apps button:nth-last-child(-n+2)::after { content: ""; position: absolute; bottom: -4px; width: 4px; height: 1px; background: #777; }
        .apps button:last-child::after { width: 10px; height: 2px; background: #333; }
        .tray { display: flex; align-items: center; justify-content: flex-end; gap: 11px; padding-right: 13px; color: #222; }
        .status { display: flex; gap: 5px; }
        .clock { text-align: right; }
      </style>
      <div class="weather">
        <span class="sky"><ui-icon name="weather" size="17"></ui-icon><span class="badge">2</span></span>
        <span>25°C<br>Berawan</span>
      </div>
      <div class="middle">
        <button aria-label="Mulai"><ui-icon name="windows" size="16"></ui-icon></button>
        <label class="search">
          <ui-icon name="search" size="10"></ui-icon>
          <input aria-label="Search" placeholder="Search">
          <svg width="32" height="18" viewBox="0 0 32 18">
            <rect width="32" height="18" rx="8" fill="#39255f"/>
            <path d="M5 5c6-5 16-5 22 0v5H4z" fill="#5b3f9a"/>
            <circle cx="16" cy="13" r="5" fill="#c98a78"/>
            <path d="M2 14 5 7l3 5 3 6H7c-3 0-4-2-5-4zM30 14l-3-7-3 5-3 6h4c3 0 4-2 5-4z" fill="#e5a04f"/>
            <circle cx="13" cy="12" r="1.500" fill="#f8e3d4"/><circle cx="19" cy="12" r="1.500" fill="#f8e3d4"/>
            <circle cx="10" cy="4" r="1" fill="#d9c9f2"/><circle cx="22" cy="4" r="1" fill="#d9c9f2"/>
          </svg>
        </label>
        <div class="apps">${apps.map((app) => `<button aria-label="${app}"><ui-icon name="${app}" size="16"></ui-icon></button>`).join('')}</div>
      </div>
      <div class="tray">
        <ui-icon name="chevron-up" size="9"></ui-icon>
        <ui-icon name="mic" size="11"></ui-icon>
        <ui-icon name="touchpad" size="11"></ui-icon>
        <span class="status">
          <ui-icon name="wifi" size="11"></ui-icon>
          <ui-icon name="sound" size="11"></ui-icon>
          <ui-icon name="battery" size="13"></ui-icon>
        </span>
        <span class="clock">21:54<br>05/03/2026</span>
      </div>
    `;
  }
}

window.customElements.define('browser-tabs', BrowserTabs);
window.customElements.define('browser-toolbar', BrowserToolbar);
window.customElements.define('outlook-header', OutlookHeader);
window.customElements.define('app-rail', AppRail);
window.customElements.define('ribbon-bar', RibbonBar);
window.customElements.define('folder-item', FolderItem);
window.customElements.define('folder-tree', FolderTree);
window.customElements.define('check-field', CheckField);
window.customElements.define('time-row', TimeRow);
window.customElements.define('rich-editor', RichEditor);
window.customElements.define('settings-nav', SettingsNav);
window.customElements.define('settings-dialog', SettingsDialog);
window.customElements.define('outlook-app', OutlookApp);
window.customElements.define('task-bar', TaskBar);
</script>
</body>
</html>
